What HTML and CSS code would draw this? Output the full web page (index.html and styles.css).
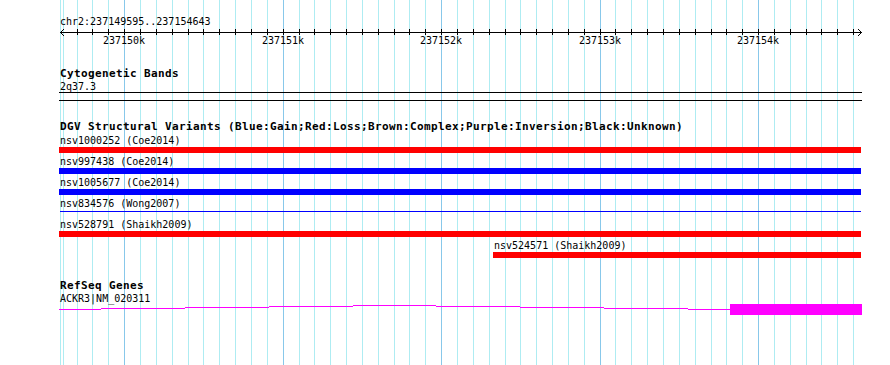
FILE: index.html
```html
<!DOCTYPE html>
<html lang="en">
<head>
<meta charset="utf-8">
<title>chr2:237149595..237154643</title>
<link rel="stylesheet" href="styles.css">
</head>
<body>
<div class="browser">
  <svg class="grid" width="890" height="365" viewBox="0 0 890 365" aria-hidden="true">
    <path class="grid-minor" d="M60.5 0v365M63.5 0v365M77.5 0v365M92.5 0v365M108.5 0v365M140.5 0v365M156.5 0v365M172.5 0v365M188.5 0v365M203.5 0v365M219.5 0v365M235.5 0v365M251.5 0v365M267.5 0v365M299.5 0v365M314.5 0v365M330.5 0v365M346.5 0v365M362.5 0v365M378.5 0v365M394.5 0v365M409.5 0v365M425.5 0v365M457.5 0v365M473.5 0v365M489.5 0v365M505.5 0v365M520.5 0v365M536.5 0v365M552.5 0v365M568.5 0v365M584.5 0v365M615.5 0v365M631.5 0v365M647.5 0v365M663.5 0v365M679.5 0v365M695.5 0v365M711.5 0v365M726.5 0v365M742.5 0v365M774.5 0v365M790.5 0v365M806.5 0v365M821.5 0v365M837.5 0v365M853.5 0v365"/>
    <path class="grid-major" d="M124.5 0v365M283.5 0v365M441.5 0v365M600.5 0v365M758.5 0v365"/>
  </svg>

  <div class="tracks">
    <section class="ruler">
      <div class="ruler-title small">chr2:237149595..237154643</div>
      <svg class="axis" width="803" height="8" aria-hidden="true">
        <path class="axis-line" d="M1 5.5H803"/>
        <path class="axis-ticks" d="M18.5 2v6M33.5 2v6M49.5 2v6M65.5 2v6M81.5 2v6M97.5 2v6M113.5 2v6M129.5 2v6M144.5 2v6M160.5 2v6M176.5 2v6M192.5 2v6M208.5 2v6M224.5 2v6M240.5 2v6M255.5 2v6M271.5 2v6M287.5 2v6M303.5 2v6M319.5 2v6M335.5 2v6M350.5 2v6M366.5 2v6M382.5 2v6M398.5 2v6M414.5 2v6M430.5 2v6M446.5 2v6M461.5 2v6M477.5 2v6M493.5 2v6M509.5 2v6M525.5 2v6M541.5 2v6M556.5 2v6M572.5 2v6M588.5 2v6M604.5 2v6M620.5 2v6M636.5 2v6M652.5 2v6M667.5 2v6M683.5 2v6M699.5 2v6M715.5 2v6M731.5 2v6M747.5 2v6M762.5 2v6M778.5 2v6M794.5 2v6"/>
        <g class="axis-arrow">
          <rect x="1" y="5" width="1" height="1"/><rect x="2" y="4" width="1" height="1"/><rect x="3" y="3" width="1" height="1"/><rect x="4" y="2" width="1" height="1"/>
          <rect x="2" y="6" width="1" height="1"/><rect x="3" y="7" width="1" height="1"/><rect x="4" y="8" width="1" height="1"/>
          <rect x="802" y="5" width="1" height="1"/><rect x="801" y="4" width="1" height="1"/><rect x="800" y="3" width="1" height="1"/><rect x="799" y="2" width="1" height="1"/>
          <rect x="801" y="6" width="1" height="1"/><rect x="800" y="7" width="1" height="1"/><rect x="799" y="8" width="1" height="1"/>
        </g>
      </svg>
      <div class="tick-labels small">
        <span class="tick-label" style="left:44px">237150k</span>
        <span class="tick-label" style="left:203px">237151k</span>
        <span class="tick-label" style="left:361px">237152k</span>
        <span class="tick-label" style="left:520px">237153k</span>
        <span class="tick-label" style="left:678px">237154k</span>
      </div>
    </section>

    <section class="track track-cyto">
      <div class="track-title bold">Cytogenetic Bands</div>
      <div class="feature-label small">2q37.3</div>
      <div class="band"></div>
    </section>

    <section class="track track-dgv">
      <div class="track-title bold">DGV Structural Variants (Blue:Gain;Red:Loss;Brown:Complex;Purple:Inversion;Black:Unknown)</div>
      <div class="variants">
        <div class="variant">
          <div class="feature-label small" style="margin-left:0px">nsv1000252 (Coe2014)</div>
          <div class="bar-area"><div class="bar loss" style="margin-left:0px;width:802px"></div></div>
        </div>
        <div class="variant">
          <div class="feature-label small" style="margin-left:0px">nsv997438 (Coe2014)</div>
          <div class="bar-area"><div class="bar gain" style="margin-left:0px;width:802px"></div></div>
        </div>
        <div class="variant">
          <div class="feature-label small" style="margin-left:0px">nsv1005677 (Coe2014)</div>
          <div class="bar-area"><div class="bar gain" style="margin-left:0px;width:802px"></div></div>
        </div>
        <div class="variant">
          <div class="feature-label small" style="margin-left:0px">nsv834576 (Wong2007)</div>
          <div class="bar-area"><div class="bar gain thin" style="margin-left:1px;width:801px"></div></div>
        </div>
        <div class="variant">
          <div class="feature-label small" style="margin-left:0px">nsv528791 (Shaikh2009)</div>
          <div class="bar-area"><div class="bar loss" style="margin-left:0px;width:802px"></div></div>
        </div>
        <div class="variant">
          <div class="feature-label small" style="margin-left:434px">nsv524571 (Shaikh2009)</div>
          <div class="bar-area"><div class="bar loss" style="margin-left:434px;width:368px"></div></div>
        </div>
      </div>
    </section>

    <section class="track track-genes">
      <div class="track-title bold">RefSeq Genes</div>
      <div class="feature-label small">ACKR3|NM_020311</div>
      <svg class="gene" width="803" height="11" aria-hidden="true">
        <g class="gene-intron">
          <rect x="0" y="5" width="42" height="1"/>
          <rect x="42" y="4" width="84" height="1"/>
          <rect x="126" y="3" width="84" height="1"/>
          <rect x="210" y="2" width="84" height="1"/>
          <rect x="294" y="1" width="83" height="1"/>
          <rect x="377" y="2" width="84" height="1"/>
          <rect x="461" y="3" width="84" height="1"/>
          <rect x="545" y="4" width="84" height="1"/>
          <rect x="629" y="5" width="42" height="1"/>
        </g>
        <rect class="gene-exon" x="671" y="0" width="132" height="11"/>
      </svg>
    </section>
  </div>
</div>
</body>
</html>
```

FILE: styles.css
```css
html, body {
  margin: 0;
  padding: 0;
  background: #ffffff;
}

.browser {
  position: relative;
  width: 890px;
  height: 365px;
  overflow: hidden;
  background: #ffffff;
  color: #000000;
}

.grid {
  position: absolute;
  top: 0;
  left: 0;
  z-index: 0;
}

.grid-minor {
  stroke: #aeecf2;
  stroke-width: 1;
  shape-rendering: crispEdges;
}

.grid-major {
  stroke: #88c8ea;
  stroke-width: 1;
  shape-rendering: crispEdges;
}

.tracks {
  position: relative;
  z-index: 1;
  margin-left: 59px;
  width: 803px;
  display: flex;
  flex-direction: column;
}

.small {
  font-family: "DejaVu Sans Mono", "Liberation Mono", monospace;
  font-size: 10px;
  line-height: 11px;
  height: 11px;
  white-space: pre;
}

.bold {
  font-family: "DejaVu Sans Mono", "Liberation Mono", monospace;
  font-weight: bold;
  font-size: 11px;
  line-height: 12px;
  height: 12px;
  letter-spacing: 0.377px;
  white-space: pre;
}

/* ruler */
.ruler {
  display: flex;
  flex-direction: column;
}

.ruler-title {
  margin-top: 16px;
  padding-left: 1px;
}

.axis {
  display: block;
  overflow: visible;
  shape-rendering: crispEdges;
}

.axis-line,
.axis-ticks {
  stroke: #000000;
  stroke-width: 1;
  fill: none;
}

.axis-arrow rect {
  fill: #000000;
}

.tick-labels {
  position: relative;
}

.tick-label {
  position: absolute;
  top: 0;
}

/* tracks */
.track {
  display: flex;
  flex-direction: column;
}

.track-title {
  padding-left: 1px;
}

.feature-label {
  padding-left: 1px;
}

.track-cyto {
  margin-top: 22px;
}

.track-cyto .feature-label {
  margin-top: 1px;
}

.band {
  height: 7px;
  border-top: 1px solid #000000;
  border-bottom: 1px solid #000000;
}

.track-dgv {
  margin-top: 20px;
}

.variants {
  margin-top: 2px;
  display: flex;
  flex-direction: column;
  gap: 3px;
}

.variant {
  display: flex;
  flex-direction: column;
  gap: 1px;
}

.bar-area {
  height: 6px;
  display: flex;
  flex-direction: column;
}

.bar {
  height: 6px;
}

.bar.thin {
  height: 1px;
  margin-top: 1px;
}

.loss {
  background: #ff0000;
}

.gain {
  background: #0000ff;
}

.track-genes {
  margin-top: 22px;
}

.track-genes .feature-label {
  margin-top: 1px;
}

.gene {
  display: block;
  shape-rendering: crispEdges;
}

.gene-intron rect,
.gene-exon {
  fill: #ff00ff;
}
```
